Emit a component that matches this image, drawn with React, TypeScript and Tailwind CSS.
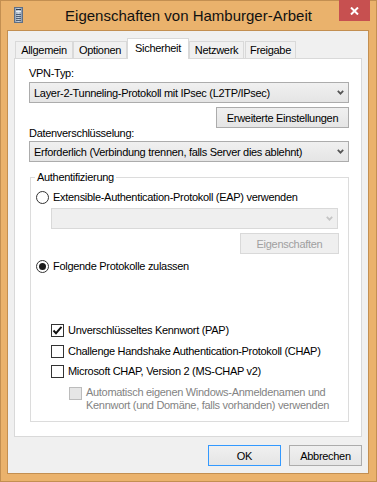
import { ReactNode } from "react";

function ServerIcon() {
  return (
    <svg width="9" height="16" viewBox="0 0 9 16">
      <defs>
        <linearGradient id="srv" x1="0" x2="1" y1="0" y2="0">
          <stop offset="0" stopColor="#8A9BB0" />
          <stop offset="0.5" stopColor="#C9D3DE" />
          <stop offset="1" stopColor="#7C8DA3" />
        </linearGradient>
      </defs>
      <rect x="0.5" y="0.5" width="8" height="15" fill="url(#srv)" stroke="#5E6F86" />
      <rect x="2" y="2" width="5" height="1" fill="#2F3C4E" />
      <rect x="2" y="4" width="5" height="1" fill="#E9EEF4" />
      <rect x="2" y="7" width="5" height="1" fill="#4E5E73" />
      <rect x="2" y="9" width="5" height="1" fill="#4E5E73" />
      <rect x="2" y="11" width="5" height="1" fill="#4E5E73" />
      <rect x="2" y="13" width="5" height="1" fill="#4E5E73" />
    </svg>
  );
}

function Chevron({ disabled = false }: { disabled?: boolean }) {
  return (
    <svg width="7" height="5" viewBox="0 0 7 5" className="flex-none">
      <path
        d="M0.8 0.8 L3.5 3.7 L6.2 0.8"
        fill="none"
        stroke={disabled ? "#C4C4C4" : "#555555"}
        strokeWidth="1.7"
      />
    </svg>
  );
}

function Combo({ text = "", disabled = false, className = "" }: { text?: string; disabled?: boolean; className?: string }) {
  return (
    <div
      className={`flex h-[21px] items-center border pl-[4px] pr-[4px] ${
        disabled
          ? "border-[#D9D9D9] bg-[#EFEFEF]"
          : "border-[#ACACAC] bg-linear-to-b from-[#F0F0F0] to-[#E5E5E5]"
      } ${className}`}
    >
      <span className="flex-1 truncate">{text}</span>
      <Chevron disabled={disabled} />
    </div>
  );
}

function Button({
  children,
  className = "",
  variant = "normal",
}: {
  children: ReactNode;
  className?: string;
  variant?: "normal" | "default" | "disabled";
}) {
  const tones = {
    normal: "border-[#ACACAC] bg-linear-to-b from-[#F0F0F0] to-[#E5E5E5] text-black",
    default: "border-[#3399FF] bg-linear-to-b from-[#F0F0F0] to-[#E5E5E5] text-black",
    disabled: "border-[#D9D9D9] bg-[#EFEFEF] text-[#A0A0A0]",
  } as const;
  return (
    <div className={`flex h-[21px] items-center justify-center border ${tones[variant]} ${className}`}>
      {children}
    </div>
  );
}

function Radio({ checked = false, label, className = "" }: { checked?: boolean; label: string; className?: string }) {
  return (
    <div className={`flex h-[16px] items-center ${className}`}>
      <div className="grid h-[13px] w-[13px] flex-none place-items-center rounded-full border border-[#333333] bg-white">
        {checked && <div className="h-[7px] w-[7px] rounded-full bg-[#1A1A1A]" />}
      </div>
      <span className="ml-[4px]">{label}</span>
    </div>
  );
}

function CheckBox({ checked = false, disabled = false }: { checked?: boolean; disabled?: boolean }) {
  return (
    <div
      className={`grid h-[13px] w-[13px] flex-none place-items-center border ${
        disabled ? "border-[#BCBCBC] bg-[#E6E6E6]" : "border-[#333333] bg-white"
      }`}
    >
      {checked && (
        <svg width="11" height="11" viewBox="0 0 11 11">
          <path d="M1.5 5.5 L4 8.2 L9.5 1.8" fill="none" stroke="#111111" strokeWidth="1.9" />
        </svg>
      )}
    </div>
  );
}

function Check({ checked = false, label, className = "" }: { checked?: boolean; label: string; className?: string }) {
  return (
    <div className={`flex h-[16px] items-center ${className}`}>
      <CheckBox checked={checked} />
      <span className="ml-[4px]">{label}</span>
    </div>
  );
}

function Tab({ label, active = false, width }: { label: string; active?: boolean; width: string }) {
  if (active) {
    return (
      <div
        className={`relative z-10 -mb-px flex h-[21px] items-start justify-center border border-b-0 border-[#D9D9D9] bg-white pt-[2px] ${width}`}
      >
        {label}
      </div>
    );
  }
  return (
    <div
      className={`flex h-[17px] items-center justify-center border border-b-0 border-[#D9D9D9] bg-[#F0F0F0] ${width}`}
    >
      {label}
    </div>
  );
}

export default function App() {
  return (
    <div className="flex h-[482px] w-[377px] flex-col border border-[#C38F51] bg-[#EAB26C] font-['Liberation_Sans',Arial,sans-serif] text-[11px] leading-[14px] tracking-[-0.3px] text-black">
      {/* title bar */}
      <div className="flex h-[29px] flex-none">
        <div className="w-[37px] flex-none pl-[13px] pt-[6px]">
          <ServerIcon />
        </div>
        <div className="flex-1 pt-[6px] text-center text-[15px] leading-[18px] tracking-normal text-[#111111]">
          Eigenschaften von Hamburger-Arbeit
        </div>
        <div className="w-[37px] flex-none">
          <div className="-mt-px grid h-[21px] w-[31px] place-items-center bg-[#C75050]">
            <svg width="9" height="8" viewBox="0 0 9 8">
              <path d="M1 0.5 L8 7.5 M8 0.5 L1 7.5" stroke="#FFFFFF" strokeWidth="2" />
            </svg>
          </div>
        </div>
      </div>

      {/* client area */}
      <div className="mb-[7px] ml-[6px] mr-[7px] flex flex-1 flex-col border border-[#C38F51] bg-[#F0F0F0] px-[6px] pt-[7px]">
        <div className="flex h-[20px] items-end pl-[1px]">
          <Tab label="Allgemein" width="w-[58px]" />
          <Tab label="Optionen" width="w-[54px]" />
          <Tab label="Sicherheit" width="w-[62px]" active />
          <Tab label="Netzwerk" width="w-[55px]" />
          <div className="w-[1px]" />
          <Tab label="Freigabe" width="w-[51px]" />
        </div>

        <div className="flex h-[379px] flex-col border border-[#D9D9D9] bg-white pl-[14px] pr-[12px]">
          <div className="mt-[7px] h-[14px]">VPN-Typ:</div>
          <Combo className="mt-[2px]" text="Layer-2-Tunneling-Protokoll mit IPsec (L2TP/IPsec)" />
          <Button className="mt-[4px] w-[133px] self-end">Erweiterte Einstellungen</Button>
          <div className="-mt-[2px] h-[14px]">Datenverschlüsselung:</div>
          <Combo className="mt-[1px]" text="Erforderlich (Verbindung trennen, falls Server dies ablehnt)" />

          <div className="relative ml-[1px] mt-[15px] flex h-[245px] flex-col border border-[#DCDCDC]">
            <div className="absolute -top-[8px] left-[4px] bg-white px-[2px]">Authentifizierung</div>
            <Radio className="ml-[5px] mt-[11px]" label="Extensible-Authentication-Protokoll (EAP) verwenden" />
            <Combo className="ml-[20px] mr-[10px] mt-[3px]" disabled />
            <Button variant="disabled" className="mr-[9px] mt-[4px] w-[99px] self-end">
              Eigenschaften
            </Button>
            <Radio className="ml-[5px] mt-[4px]" checked label="Folgende Protokolle zulassen" />

            <Check className="ml-[20px] mt-[48px]" checked label="Unverschlüsseltes Kennwort (PAP)" />
            <Check className="ml-[20px] mt-[5px]" label="Challenge Handshake Authentication-Protokoll (CHAP)" />
            <Check className="ml-[20px] mt-[4px]" label="Microsoft CHAP, Version 2 (MS-CHAP v2)" />
            <div className="ml-[38px] mt-[7px] flex items-start leading-[13px] text-[#838383]">
              <div className="pt-px">
                <CheckBox disabled />
              </div>
              <span className="ml-[4px]">
                Automatisch eigenen Windows-Anmeldenamen und
                <br />
                Kennwort (und Domäne, falls vorhanden) verwenden
              </span>
            </div>
          </div>
        </div>

        <div className="mt-[8px] flex justify-end gap-[8px]">
          <Button variant="default" className="w-[73px]">
            OK
          </Button>
          <Button className="w-[73px]">Abbrechen</Button>
        </div>
      </div>
    </div>
  );
}
